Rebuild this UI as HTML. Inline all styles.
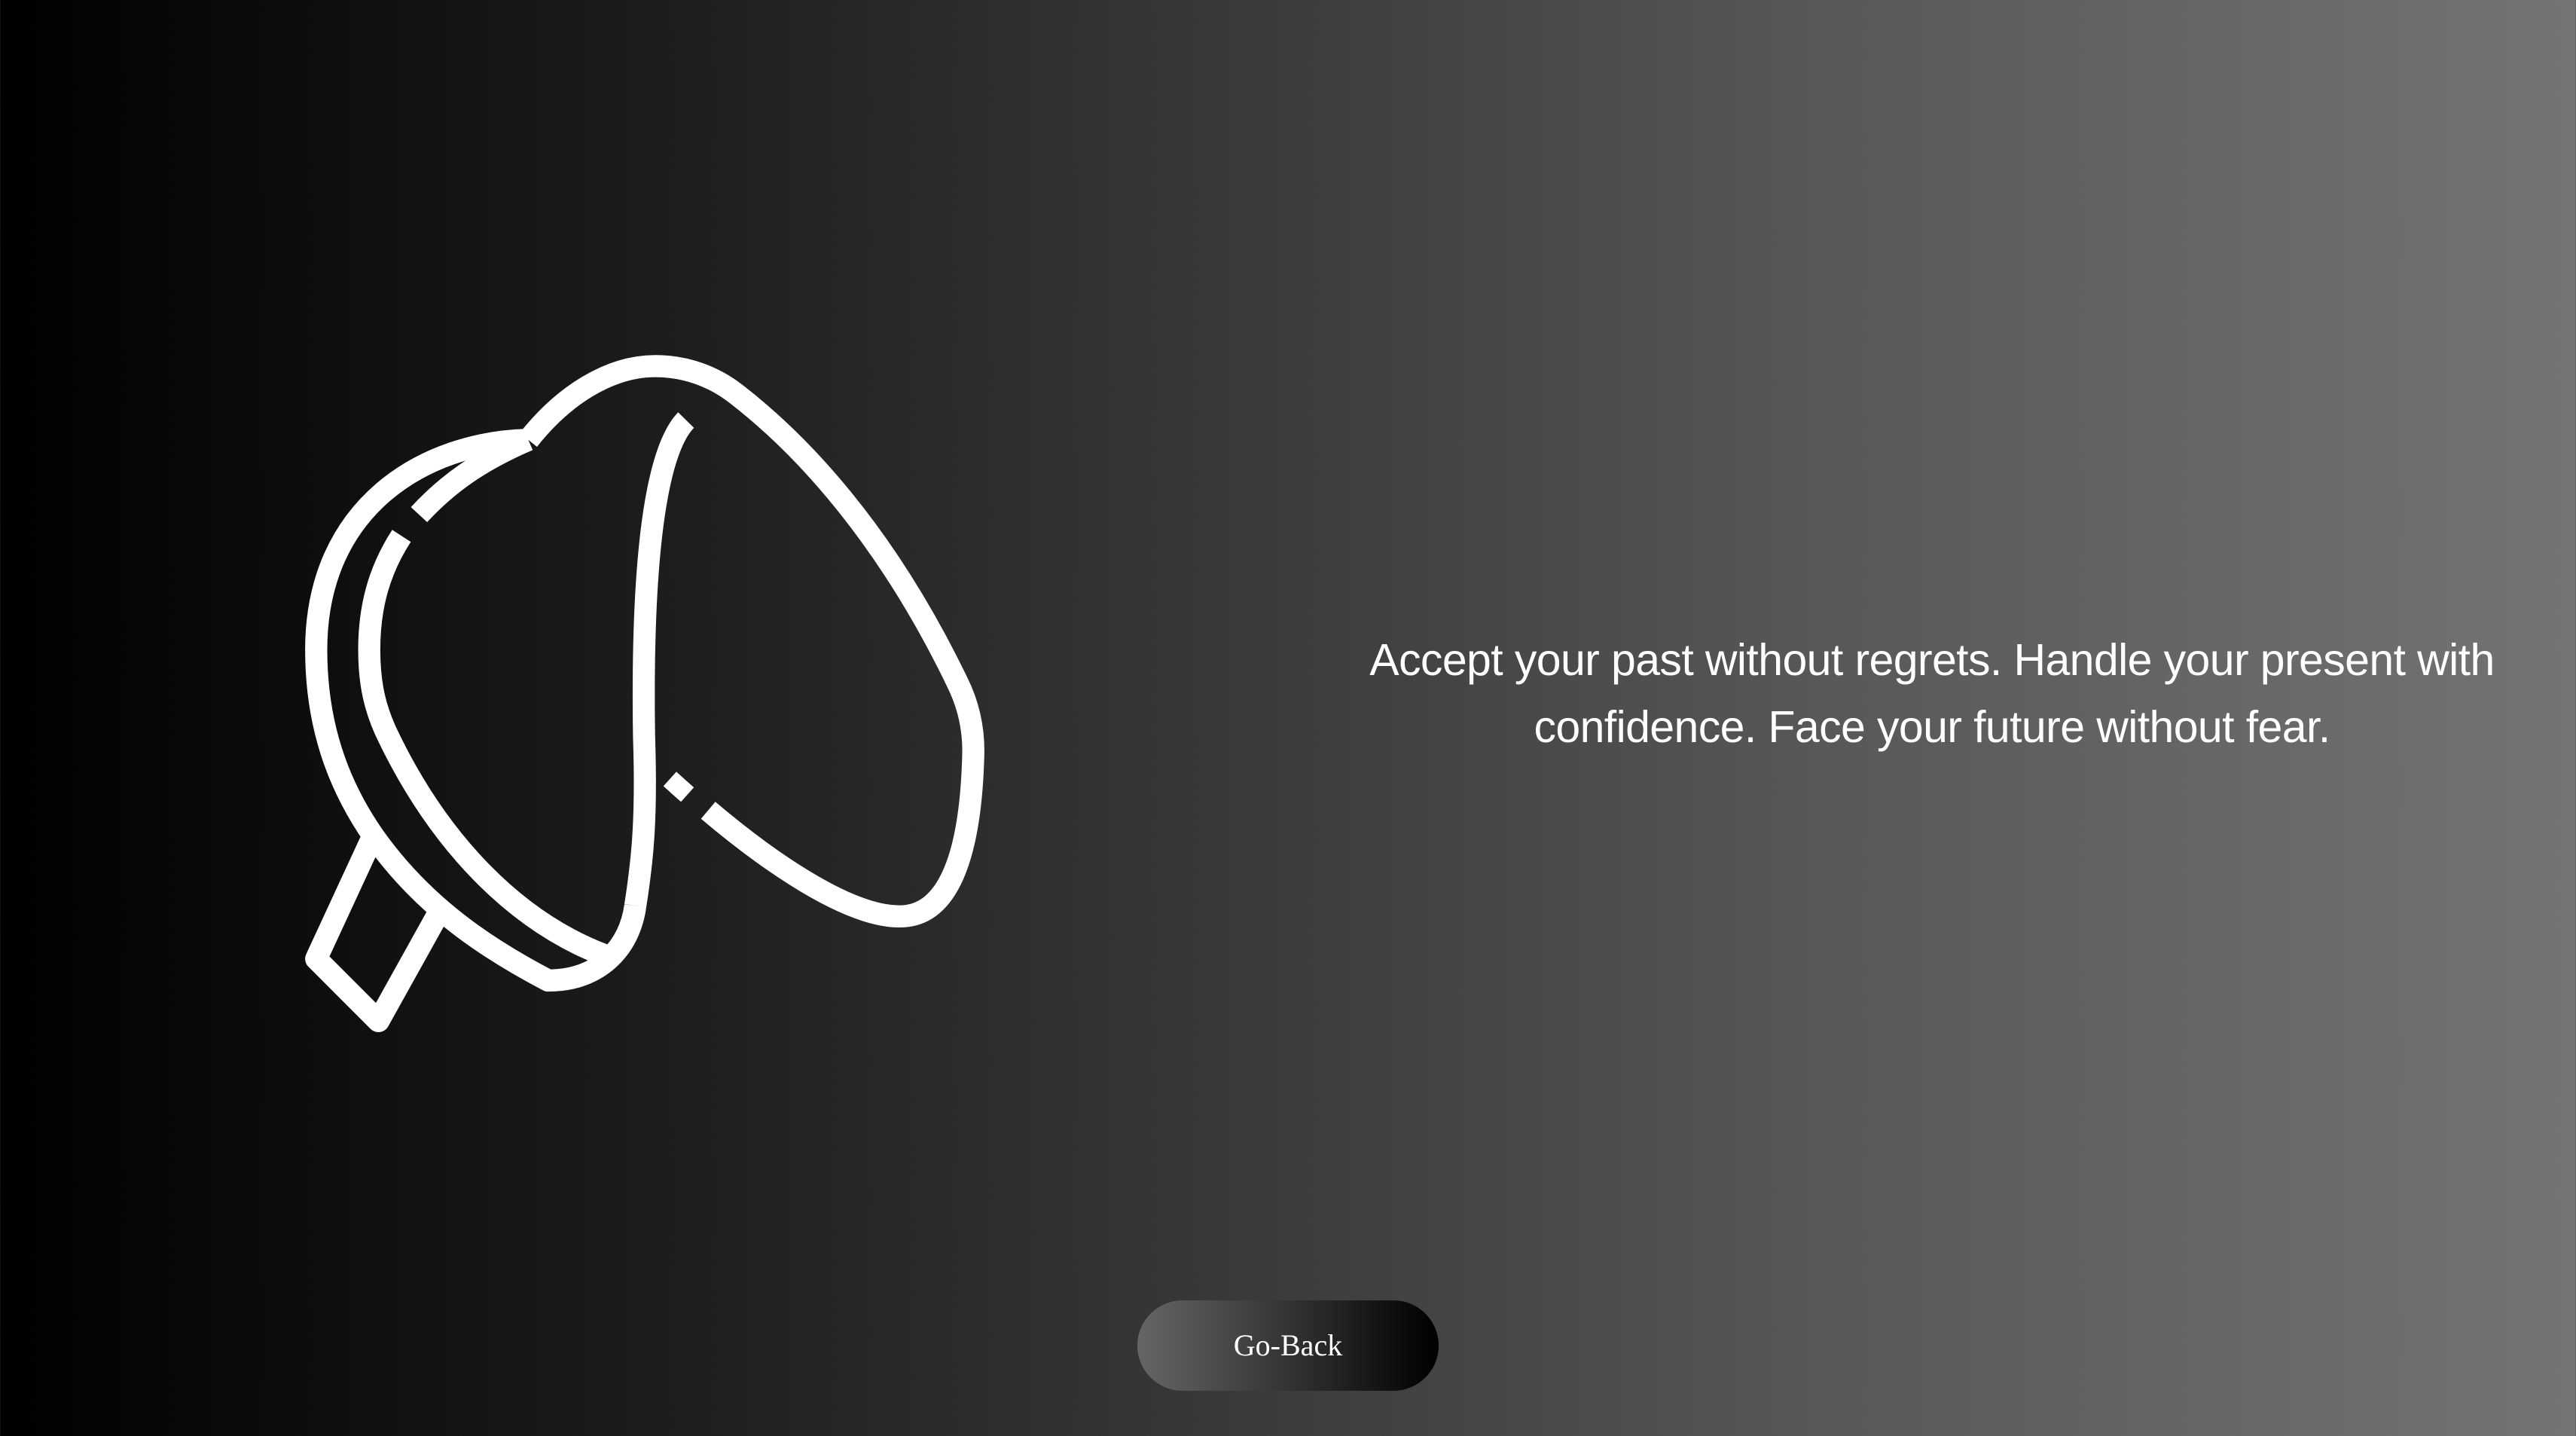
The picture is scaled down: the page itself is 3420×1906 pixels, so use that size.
<!DOCTYPE html>
<html><head><meta charset="utf-8"><style>
html,body{margin:0;padding:0}
body{width:3420px;height:1906px;overflow:hidden;position:relative;background:linear-gradient(to right,#000 0%,#1c1c1c 25%,#3c3c3c 50%,#575757 70%,#747474 100%)}
.icon{position:absolute;left:380px;top:440px;width:960px;height:960px}
.txt{position:absolute;left:1665px;width:1800px;top:832px;text-align:center;color:#fff;font-family:"Liberation Sans",sans-serif;font-size:59px;line-height:89px;letter-spacing:-0.6px;white-space:nowrap}
.btn{position:absolute;left:1510px;top:1726px;width:400px;height:120px;border-radius:60px;background:linear-gradient(to right,#666,#333 50%,#000);color:#fff;font-family:"Liberation Serif",serif;font-size:40px;line-height:120px;text-align:center}
</style></head><body>
<svg class="icon" viewBox="0 0 1568 1568" fill="none" stroke="#fff" stroke-width="48" stroke-linejoin="round">
<path d="M525,235 C300,240 65,380 65,690 C65,850 110,980 190,1095 C300,1250 440,1340 568,1407 C680,1407 745,1335 757,1245"/>
<path d="M867,192 C800,260 770,500 776,880 C782,1060 772,1150 757,1245"/>
<path d="M525,235 C600,140 700,75 800,75 C870,75 930,100 975,135 C1150,270 1320,480 1455,760 C1480,810 1490,860 1490,910 C1485,1150 1430,1268 1330,1268 C1200,1268 1000,1110 915,1038"/>
<path d="M525,235 C420,280 350,330 288,397"/>
<path d="M250,443 C200,520 180,600 180,690 C180,770 195,820 215,865 C330,1110 500,1280 690,1352"/>
<path d="M190,1090 L65,1360 L200,1495 L332,1258"/>
<path d="M832,970 L852,988 L870,1004" stroke-width="42"/>
</svg>
<div class="txt">Accept your past without regrets. Handle your present with<br>confidence. Face your future without fear.</div>
<div class="btn">Go-Back</div>
</body></html>
